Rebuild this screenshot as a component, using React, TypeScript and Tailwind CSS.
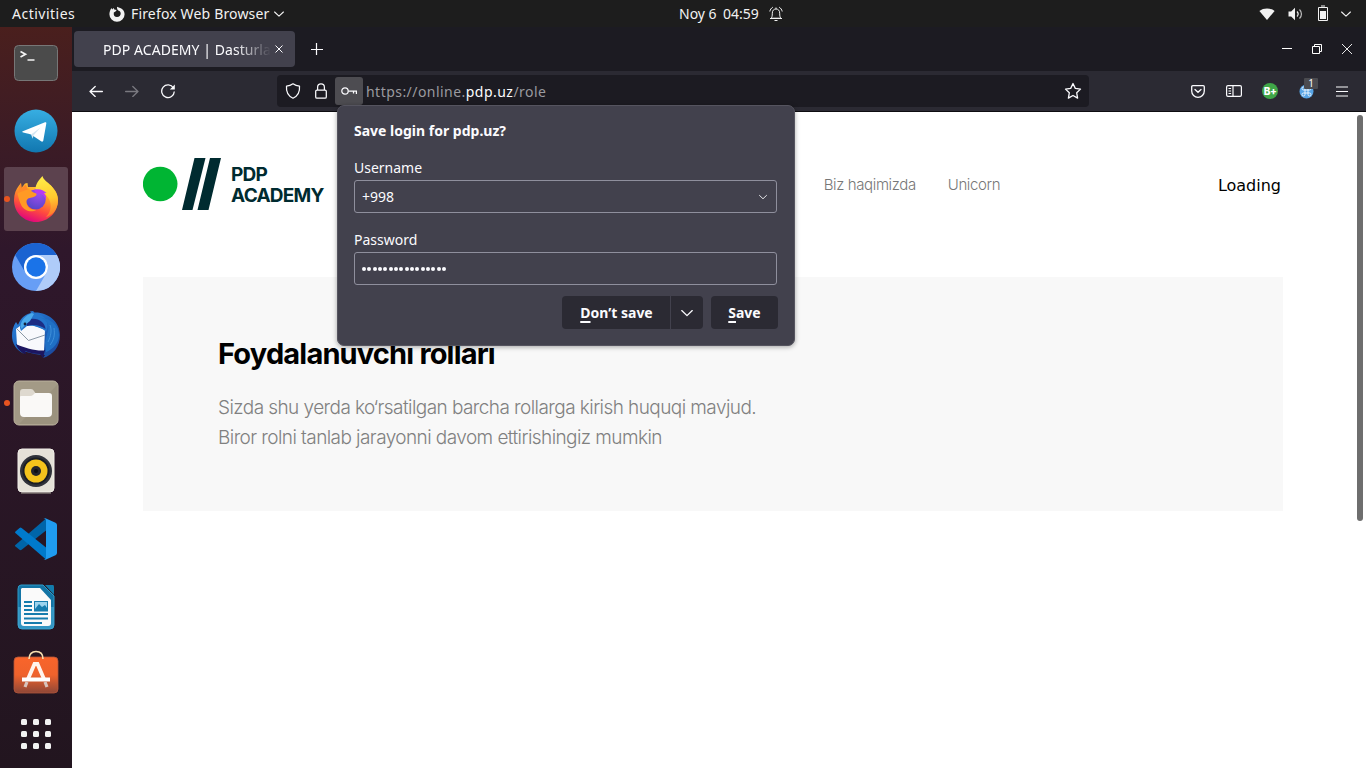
import type { ReactNode } from 'react';

const Chevron = ({ size = 10, className = '' }: { size?: number; className?: string }) => (
  <svg width={size} height={size} viewBox="0 0 10 10" fill="none" stroke="currentColor" className={className}>
    <path d="M0.6 3 5 7.2 9.4 3" strokeWidth="1.1" strokeLinecap="round" strokeLinejoin="round" />
  </svg>
);

function TopBar() {
  return (
    <header className="flex h-[27px] shrink-0 items-center bg-[#1d1d1d] text-sm text-[#f2f2f2]">
      <div className="flex w-[679px] items-center pl-3">
        <span className="w-[97px] tracking-[0.5px]">Activities</span>
        <svg width="16" height="16" viewBox="0 0 16 16" className="mr-[6px]">
          <path
            fill="#f2f2f2"
            d="M8 0.8 9.8 1.4C13.6 2.2 15.6 5 15.6 8.3A7.6 7.4 0 0 1 .4 8.3C.4 6 1.2 3.5 2.6 1.9l.5 1.7L4.7 2l.6 1.6 2.4.5-1.2 1.5-1.7.8C4.3 9.3 5.8 11 8 11c2.4 0 3.7-1.6 3.7-3.5 0-1.4-.8-2.5-2.1-2.8L8.2 3.2Z"
          />
        </svg>
        <span className="tracking-[0.16px]">Firefox Web Browser</span>
        <Chevron className="ml-[5px]" />
      </div>
      <div className="flex items-center">
        <span className="w-[37px] whitespace-nowrap">Noy 6</span>
        <span className="ml-[7px]">04:59</span>
        <svg width="14" height="16" viewBox="0 0 14 16" fill="none" stroke="#f2f2f2" className="ml-[10px]">
          <path d="M2 12.2c1-1 1.3-2 1.3-5C3.300 4.500 4.800 3 7 3s3.700 1.500 3.700 4.200c0 3 .3 4 1.300 5ZM1 12.500h12M5.500 14.500h3M7 3V1.500M3.800 1.200C2.200 2.200 1.200 3.500.8 5.500M10.200 1.200c1.600 1 2.600 2.300 3 4.300" />
        </svg>
      </div>
      <div className="ml-auto flex items-center pr-[15px]">
        <svg width="16" height="12" viewBox="0 0 16 12" fill="#f2f2f2" className="mr-[13px]">
          <path d="M.4 3C4.500-.3 11.500-.3 15.600 3L8 12Z" />
        </svg>
        <svg width="16" height="14" viewBox="0 0 16 14" className="mr-[14px]">
          <path fill="#f2f2f2" d="M.5 4.500h2.700L7 .8v12.400L3.200 9.500H.5Z" />
          <path fill="none" stroke="#f2f2f2" strokeWidth="1.200" d="M9 4.500c1.300 1.400 1.300 3.600 0 5" />
          <path fill="none" stroke="#bbb" strokeWidth="1.200" d="M11.500 2.500c2.600 2.600 2.600 6.400 0 9" />
        </svg>
        <svg width="10" height="16" viewBox="0 0 10 16" className="mr-[13px] -translate-y-px">
          <path fill="none" stroke="#f2f2f2" d="M.5 2.500h9v13h-9ZM3 1h4" />
          <path fill="#f2f2f2" d="M2 6h6v8H2Z" />
        </svg>
        <Chevron />
      </div>
    </header>
  );
}

function TerminalIcon() {
  return (
    <svg width="44" height="36" viewBox="0 0 44 36">
      <rect x=".5" y=".5" width="43" height="35" rx="4" fill="#4b4b4b" stroke="#777" />
      <path d="M6.500 6.500 11.500 9.200 6.500 12M13.500 15h7" fill="none" stroke="#f4f4f4" strokeWidth="1.700" />
    </svg>
  );
}

function TelegramIcon() {
  return (
    <svg width="44" height="44" viewBox="0 0 44 44">
      <defs>
        <linearGradient id="tg" x2="0" y2="1">
          <stop stopColor="#37aee2" />
          <stop offset="1" stopColor="#1177b0" />
        </linearGradient>
      </defs>
      <circle cx="22" cy="22" r="21.500" fill="url(#tg)" />
      <path fill="#fff" d="M8.200 22.500 31 13.300c.9-.3 1.500.2 1.300 1.200l-3 17c-.2 1.200-1.200 1.500-2.200.8L17 25.500c-3.500-.9-6.500-1.500-8.500-2.200Z" />
      <path fill="#d5e7f2" d="m17 25.500 9.500-7-7 8-.8 3.200Z" />
    </svg>
  );
}

function FirefoxIcon() {
  return (
    <svg width="46" height="48" viewBox="0 0 46 48">
      <defs>
        <linearGradient id="fx1" x1=".75" y1=".2" x2=".4" y2="1">
          <stop offset="0" stopColor="#ffc02f" />
          <stop offset=".3" stopColor="#ff9029" />
          <stop offset=".62" stopColor="#ff4a3f" />
          <stop offset="1" stopColor="#e0067c" />
        </linearGradient>
        <radialGradient id="fx2" cx=".65" cy=".2" r=".8">
          <stop stopColor="#a04df0" />
          <stop offset="1" stopColor="#5a45c8" />
        </radialGradient>
        <linearGradient id="fx3" x2=".1" y2="1">
          <stop stopColor="#fff04a" />
          <stop offset=".6" stopColor="#ffc92e" />
          <stop offset="1" stopColor="#ff7d2c" />
        </linearGradient>
      </defs>
      <path fill="url(#fx1)" d="M1 25C1 19 3 14 6 10.500L8 8l.5 5L12 8.500 14.500 8l.5 4h14l8-2c5 4 8 9 8 15 0 12.500-10 22-22 22S1 37.500 1 25Z" />
      <path fill="url(#fx3)" d="M29.500 1c1 4 5 6 8.500 9.500 5 6 8 11 6.500 19C43 36 39 40 33 42c5-5 6-12 3-18-3-5-7-8-13.500-9.500 0-6 3.500-9.500 7-13.500Z" />
      <circle cx="22.700" cy="24.500" r="10" fill="url(#fx2)" />
      <path fill="#ff9a25" d="M4.500 19c1.500-4 4-6 8-6.500 3 0 5 3.500 8 5l3 1c.5 2-1 3-3.500 3.700-3 .8-5.500.5-6.500 3.800-.5 5 4 9.500 10 8.700-5 3.500-12 1-15-4-2-4-3-8-4-11.700Z" />
      <path fill="#ff8a2a" d="M5 18c0-3.500 1.300-7 3-10l.5 5L13 9.500l1.500 5Z" />
      <path fill="#b63bf3" d="M21 14.800c5-1.500 9-.3 12.500 3.200l-2.500.2c2 2 2.500 4 1.800 6.300-2-4.500-4.500-6-9.500-6Z" />
    </svg>
  );
}

function ChromiumIcon() {
  return (
    <svg width="48" height="48" viewBox="0 0 48 48">
      <circle cx="24" cy="24" r="24" fill="#679ef5" />
      <path fill="#1b63d1" d="M3.200 12A24 24 0 0 1 44.800 12H24A12 12 0 0 0 13.600 30Z" />
      <path fill="#afccf9" d="M44.800 12A24 24 0 0 1 24 48l10.400-18A12 12 0 0 0 24 12Z" />
      <circle cx="24" cy="24" r="12" fill="#fff" />
      <circle cx="24" cy="24" r="9.700" fill="#1a73e8" />
    </svg>
  );
}

function ThunderbirdIcon() {
  return (
    <svg width="48" height="48" viewBox="0 0 48 48">
      <defs>
        <linearGradient id="tb" x2="1" y2="1">
          <stop stopColor="#2f86dc" />
          <stop offset=".5" stopColor="#1d63bc" />
          <stop offset="1" stopColor="#1b4396" />
        </linearGradient>
      </defs>
      <path fill="url(#tb)" d="M4 11 6 14 C9 6 14 3 19 2L18 .5 21 0l1.500 1.500C36 1 48 11 48 24c0 12-7 20-17 23l2-3c-9 0-18-3-25-5l4 4C4 39 0 32 0 25 0 20 1 15 4 11Z" />
      <path fill="#1c1660" d="M4 33c8 2 18 5 29 6l-2 8-3-4c-6 0-10-1-15-3l1 3C8 41 5 37 4 33Z" />
      <path fill="#f8f9fc" d="M4 18 8 15l12-1 13 5-1 20.500C23 40 13 37 5 33.500Z" />
      <path d="m5 18 11.500 11.500L33 24" stroke="#8b98a5" fill="none" />
      <path fill="#2475cc" d="M8 17c0-7 5-13 12-15 5 0 11 2 14 7 2 4 2 7 0 12-4-5-12-7-19-6l-6 5Z" />
      <path fill="#1c2d84" d="M19 8c-3 1-4.500 4-4 7 6-2 13-1 18.500 3C33 12 27 7 19 8Z" />
      <path fill="#1f70c5" d="M27 6c10 4 11 9 8 17l-2 9 1 9c8-3 13-10 13-17C47 14 39 8 27 6Z" />
      <path fill="#4aa9ea" d="M8.500 15C9 9 14 4 20 2l2 1-4 7-5 4-3.500 4Z" />
      <circle cx="13" cy="13" r="1.400" fill="#151f3a" />
      <path d="M38 14c2 5 1 11-2 17m6-14c1 7 0 12-4 17" stroke="#4293dc" strokeWidth=".9" fill="none" />
    </svg>
  );
}

function FilesIcon() {
  return (
    <svg width="46" height="46" viewBox="0 0 46 46">
      <rect x="1" y="1" width="44" height="44" rx="5" fill="#a39a86" stroke="#bbb29d" />
      <path fill="#8f8674" d="M45 4 6 44h34q5 0 5-5Z" opacity=".4" />
      <path fill="#ded9cf" d="M7 12q0-3 3-3h8q2 0 3 2l2 3h14v10H7Z" />
      <path fill="#faf9f7" d="M7 17q0-1 1-1h9q2 0 3-1l2-2h14q3 0 3 3v17q0 4-4 4H11q-4 0-4-4Z" />
    </svg>
  );
}

function RhythmboxIcon() {
  return (
    <svg width="38" height="46" viewBox="0 0 38 46">
      <rect x="1" y="1" width="36" height="43" rx="4" fill="#e5e1d8" stroke="#f1eee8" />
      <path d="M4 45h30" stroke="#a6a196" />
      <circle cx="19" cy="23" r="16" fill="#30323a" />
      <circle cx="19" cy="23" r="13.500" fill="#1a1d24" />
      <circle cx="19" cy="23" r="11.500" fill="#f3c21c" />
      <circle cx="19" cy="23" r="5" fill="#22242b" />
      <circle cx="19" cy="23" r="2" fill="#0d0e12" />
    </svg>
  );
}

function CodeIcon() {
  return (
    <svg width="42" height="42" viewBox="0 0 42 42">
      <path fill="#0065a9" d="m.5 28.500 4 3.300q1 .8 2.100 0L31 12.500V.5L.4 27q-.8.700.1 1.500Z" />
      <path fill="#007acc" d="m.5 13.500 4-3.500q1-.8 2.100 0L31 29.500v12L.4 15q-.8-.700.1-1.500Z" />
      <path fill="#1f9cf0" d="M31 41.500q-1.500.5-2.500-.5 2.500 1 2.500-1.500v-37Q31 0 28.500 1q1-1 2.500-.5l9.500 4.200Q42 5.500 42 7v28q0 1.500-1.500 2.300Z" />
    </svg>
  );
}

function WriterIcon() {
  return (
    <svg width="38" height="46" viewBox="0 0 38 46">
      <path fill="#1374a5" stroke="#2e9ac7" d="M4 1h22l11 11v29q0 4-4 4H5q-4 0-4-4V5q0-4 3-4Z" />
      <path fill="#4badd7" opacity=".6" d="M1 23h36v18q0 4-4 4H5q-4 0-4-4Z" />
      <path fill="#fafafa" d="M5 4h18l11 12v23q0 3-3 3H7q-3 0-3-3V5Z" />
      <path fill="#137cac" d="M28 1h8q1 0 1 2v8Z" />
      <path d="M7 18h8M7 22h8M7 26h8M7 30h24M7 34.500h24M7 39h18" stroke="#167cad" strokeWidth="1.900" />
      <rect x="17.500" y="17.500" width="13" height="9.500" fill="#9cd3ed" stroke="#167cad" />
      <path fill="#167cad" d="m18 25 4-5 3 3 3-2 2 3v3H18Z" />
    </svg>
  );
}

function SoftwareIcon() {
  return (
    <svg width="46" height="46" viewBox="0 0 46 46" className="-translate-y-[3px]">
      <defs>
        <linearGradient id="sw" x2="0" y2="1">
          <stop stopColor="#f9652b" />
          <stop offset=".5" stopColor="#ef622c" />
          <stop offset="1" stopColor="#8e4737" />
        </linearGradient>
      </defs>
      <rect x="1" y="8" width="44" height="36" rx="4" fill="url(#sw)" stroke="#b4553a" strokeWidth=".8" />
      <path d="M16 10c0-5 3-7.500 7-7.500s7 2.500 7 7.500" fill="none" stroke="#f7dfb0" strokeWidth="1.600" />
      <path d="m15 30 6.500-15h3L31 30" stroke="#fff4ed" strokeWidth="3.800" fill="none" />
      <path d="M9 30.500h28" stroke="#fff" strokeWidth="4" />
      <path d="m14 33-2 5m20-5 2 5" stroke="#d8c4bd" strokeWidth="3.200" />
    </svg>
  );
}

function AppsIcon() {
  return (
    <svg width="30" height="30" viewBox="0 0 30 30" fill="#f2f2f2">
      {[0, 12, 24].map((y) => [0, 12, 24].map((x) => <rect key={`${x}-${y}`} x={x} y={y} width="6" height="6" rx="1.500" />))}
    </svg>
  );
}

function DockItem({ children, active, running }: { children: ReactNode; active?: boolean; running?: boolean }) {
  return (
    <div className={`relative flex size-16 shrink-0 items-center justify-center ${active ? 'rounded-[3px] bg-[#5c424e]' : ''}`}>
      {running && <span className="absolute left-0 top-[29px] size-[6px] rounded-full bg-[#e95420]" />}
      {children}
    </div>
  );
}

function Dock() {
  return (
    <nav className="flex w-[72px] shrink-0 flex-col items-center gap-1 overflow-hidden bg-linear-to-b from-[#4a1f1d] from-0% via-[#2f172b] via-30% to-[#22151f] to-100% pt-1">
      <DockItem><TerminalIcon /></DockItem>
      <DockItem><TelegramIcon /></DockItem>
      <DockItem active running><FirefoxIcon /></DockItem>
      <DockItem><ChromiumIcon /></DockItem>
      <DockItem><ThunderbirdIcon /></DockItem>
      <DockItem running><FilesIcon /></DockItem>
      <DockItem><RhythmboxIcon /></DockItem>
      <DockItem><CodeIcon /></DockItem>
      <DockItem><WriterIcon /></DockItem>
      <DockItem><SoftwareIcon /></DockItem>
      <div className="pt-[8px]"><AppsIcon /></div>
    </nav>
  );
}

function TabStrip() {
  return (
    <div className="flex h-11 shrink-0 items-center bg-[#1c1b22] pl-[2px] text-[#fbfbfe]">
      <div className="flex h-9 w-[221px] items-center rounded-[4px] bg-[#42414d] pl-[29px]">
        <span className="w-[168px] overflow-hidden whitespace-nowrap pt-[2px] text-sm tracking-[0.06px] [mask-image:linear-gradient(to_right,#000_132px,transparent_168px)]">
          PDP ACADEMY | Dasturla
        </span>
        <svg width="8" height="8" viewBox="0 0 8 8" stroke="currentColor" className="ml-1">
          <path d="m.5.5 7 7m0-7-7 7" />
        </svg>
      </div>
      <svg width="12" height="12" viewBox="0 0 12 12" stroke="currentColor" strokeWidth="1.200" className="ml-4">
        <path d="M5.500 0v12M0 6.500h12" />
      </svg>
      <div className="ml-auto flex items-center pr-[14px]">
        <svg width="10" height="10" viewBox="0 0 10 10" stroke="#fff"><path d="M0 4.500h10" /></svg>
        <svg width="10" height="10" viewBox="0 0 10 10" fill="none" stroke="#fff" className="ml-5">
          <path d="M.5 2.500h7v7h-7ZM2.500 2.500v-2h7v7h-2" />
        </svg>
        <svg width="10" height="10" viewBox="0 0 10 10" stroke="#fff" strokeWidth=".9" className="ml-5"><path d="m0 0 10 10M10 0 0 10" /></svg>
      </div>
    </div>
  );
}

function AddressBar() {
  return (
    <div className="flex h-8 w-[812px] items-center rounded-[4px] bg-[#1c1b22]">
      <svg width="16" height="16" viewBox="0 0 16 16" fill="none" stroke="currentColor" strokeWidth="1.250" className="ml-2">
        <path strokeLinejoin="round" d="M8 .8c2 1.500 4.200 2.200 6.500 2.300.5 5.400-2 10-6.500 12.100C3.500 13.100 1 8.500 1.500 3.100 3.800 3 6 2.300 8 .8Z" />
      </svg>
      <svg width="12" height="16" viewBox="0 0 12 16" fill="none" stroke="currentColor" strokeWidth="1.250" className="ml-[14px]">
        <rect x=".7" y="7" width="10.600" height="8.200" rx="1.300" />
        <path d="M2.600 7V4.200a3.400 3.400 0 0 1 6.800 0V7" />
      </svg>
      <div className="ml-2 flex h-7 w-7 items-center justify-center rounded-[3px] bg-[#4d4c51]">
        <svg width="16" height="8" viewBox="0 0 16 8" fill="none" stroke="currentColor" strokeWidth="1.250">
          <circle cx="4" cy="4" r="3.200" />
          <path d="M7.200 4h8.200v3M12.500 4v2.500" />
        </svg>
      </div>
      <span className="ml-[3px] pt-px text-sm tracking-[0.46px] text-[#9a9a9f]">
        https://online.<span className="text-[#fbfbfe]">pdp.uz</span>/role
      </span>
      <svg width="18" height="18" viewBox="0 0 18 18" fill="none" stroke="currentColor" strokeWidth="1.300" strokeLinejoin="round" className="ml-auto mr-[7px]">
        <path d="m9 1.500 2.300 4.900 5.200.7-3.800 3.700.9 5.300L9 13.500l-4.600 2.600.9-5.300L1.500 7.100l5.200-.7Z" />
      </svg>
    </div>
  );
}

function Toolbar() {
  return (
    <div className="flex h-[41px] shrink-0 items-center border-b border-[#0d0c10] bg-[#2b2a33] pl-[17px] text-[#fbfbfe]">
      <svg width="14" height="12" viewBox="0 0 14 12" fill="none" stroke="currentColor" strokeWidth="1.300" strokeLinecap="round" strokeLinejoin="round">
        <path d="M13.400 6.500H1m5.200-5L1 6.500l5.200 5" />
      </svg>
      <svg width="14" height="12" viewBox="0 0 14 12" fill="none" stroke="#7a7980" strokeWidth="1.300" strokeLinecap="round" strokeLinejoin="round" className="ml-[22px]">
        <path d="M.6 6.500H13m-5.200-5L13 6.500l-5.200 5" />
      </svg>
      <svg width="16" height="16" viewBox="0 0 16 16" fill="none" stroke="currentColor" strokeWidth="1.300" className="ml-[21px]">
        <path d="M13.400 5A6.300 6.300 0 1 0 14.300 8.500" />
        <path d="M14.800 1.500V6.500H9.800Z" fill="currentColor" stroke="none" />
      </svg>
      <div className="ml-[101px]"><AddressBar /></div>
      <div className="ml-auto flex items-center pr-[18px]">
        <svg width="14" height="13" viewBox="0 0 14 13" fill="none" stroke="currentColor" strokeWidth="1.300">
          <path d="M1.800.7h10.400q1.100 0 1.100 1.100V6A6.300 6.300 0 0 1 .7 6V1.800Q.7.7 1.800.7Z" />
          <path d="m4 4.500 3 2.800 3-2.800" strokeLinecap="round" />
        </svg>
        <svg width="16" height="12" viewBox="0 0 16 12" fill="none" stroke="currentColor" strokeWidth="1.200" className="ml-[21px]">
          <rect x=".6" y=".6" width="14.800" height="10.800" rx="1.400" />
          <path d="M7 .6v10.800M2.500 3.500h2.600M2.500 6h2.600M2.500 8.500h2.600" />
        </svg>
        <span className="ml-[20px] flex size-4 items-center justify-center rounded-full bg-[#3fa648] font-['Inter',sans-serif] text-[10px] font-extrabold tracking-[-0.5px] text-white">
          B+
        </span>
        <span className="relative ml-[21px] flex size-[15px]">
          <svg width="15" height="15" viewBox="0 0 15 15">
            <circle cx="7.500" cy="7.500" r="7" fill="#57a4e6" />
            <path d="M6 6h3v3H6ZM6 6H4.500A1.500 1.500 0 1 1 6 4.500ZM9 6h1.500A1.500 1.500 0 1 0 9 4.500ZM6 9H4.500A1.500 1.500 0 1 0 6 10.500ZM9 9h1.500A1.500 1.500 0 1 1 9 10.500Z" fill="none" stroke="#e5f2fd" />
          </svg>
          <span className="absolute left-[5px] top-[-6px] flex h-[11px] w-[14px] items-center justify-center rounded-[1px] bg-[#4b4b50] text-[10px] leading-none text-white">
            1
          </span>
        </span>
        <svg width="12" height="11" viewBox="0 0 12 11" stroke="currentColor" strokeWidth="1.200" className="ml-[22px]">
          <path d="M0 1h12M0 5.500h12M0 10h12" />
        </svg>
      </div>
    </div>
  );
}

function Page() {
  return (
    <main className="relative flex min-h-0 flex-1 flex-col overflow-hidden bg-white font-['Inter',sans-serif]">
      <div className="ml-[71px] flex h-[144px] w-[1140px] items-center">
        <svg width="79" height="52" viewBox="0 0 79 52">
          <circle cx="17.200" cy="26" r="17.300" fill="#00b533" />
          <path fill="#002b30" d="M51.500 0h11L49.500 52H39ZM67 0h11L65.500 52H54.500Z" />
        </svg>
        <div className="ml-[9px] pt-px text-[19px] font-bold leading-[21px] tracking-[-0.75px] text-[#002b30]">
          <div>PDP</div>
          <div>ACADEMY</div>
        </div>
        <div className="ml-[500px] flex gap-8 pt-[2px] text-[15px] font-light tracking-[-0.38px] text-[#777]">
          <span className="w-[92px] whitespace-nowrap">Biz haqimizda</span>
          <span>Unicorn</span>
        </div>
        <span className="ml-auto mr-[2px] pt-[3px] font-['DejaVu_Sans',sans-serif] text-base text-black">Loading</span>
      </div>
      <section className="ml-[71px] mt-[21px] h-[234px] w-[1140px] bg-[#f8f8f8] pl-[75px] pt-[59px]">
        <h1 className="text-[29px] font-bold leading-9 tracking-[-0.83px] text-black">Foydalanuvchi rollari</h1>
        <p className="mt-[21px] text-[19px] font-light leading-[30px] tracking-[-0.57px] text-[#808080]">
          Sizda shu yerda ko‘rsatilgan barcha rollarga kirish huquqi mavjud.
          <br />
          Biror rolni tanlab jarayonni davom ettirishingiz mumkin
        </p>
      </section>
      <div className="absolute right-[3px] top-[3px] h-[406px] w-[6px] rounded-full bg-[#6e6e6e]" />
    </main>
  );
}

function LoginPopup() {
  return (
    <div className="absolute left-[337px] top-[105px] flex h-[241px] w-[458px] flex-col rounded-[7px] border border-[#55545f] bg-[#42414d] px-4 text-sm text-[#fbfbfe] shadow-[0_1px_5px_rgba(0,0,0,0.35)]">
      <div className="mt-[15px] h-5 font-bold leading-5">Save login for pdp.uz?</div>
      <div className="mt-[17px] h-5 leading-5">Username</div>
      <div className="mt-[2px] flex h-[33px] w-[423px] items-center justify-between rounded-[3px] border border-[#8f8f9d] px-[7px]">
        <span>+998</span>
        <Chevron size={8} className="mr-[2px] mt-px" />
      </div>
      <div className="mt-[17px] h-5 leading-5">Password</div>
      <div className="mt-[2px] flex h-[33px] w-[423px] items-center gap-[1.330px] rounded-[3px] border border-[#8f8f9d] px-[7px]">
        {Array.from({ length: 16 }, (_, i) => (
          <span key={i} className="size-[4px] rounded-full bg-[#fbfbfe]" />
        ))}
      </div>
      <div className="mt-[11px] flex h-[33px] justify-end font-bold">
        <div className="flex w-[108px] items-center justify-center rounded-l-[4px] bg-[#2b2a33] pl-px">
          <span><span className="underline decoration-[1.500px] underline-offset-[3px]">D</span>on’t save</span>
        </div>
        <div className="ml-px flex w-8 items-center justify-center rounded-r-[4px] bg-[#2b2a33]"><Chevron size={12} /></div>
        <div className="ml-2 flex w-[67px] items-center justify-center rounded-[4px] bg-[#2b2a33]">
          <span><span className="underline decoration-[1.500px] underline-offset-[3px]">S</span>ave</span>
        </div>
      </div>
    </div>
  );
}

export default function App() {
  return (
    <div className="relative flex h-[768px] w-[1366px] flex-col overflow-hidden font-['Noto_Sans','Open_Sans',sans-serif]">
      <TopBar />
      <div className="flex min-h-0 flex-1">
        <Dock />
        <div className="flex min-w-0 flex-1 flex-col">
          <TabStrip />
          <Toolbar />
          <Page />
        </div>
      </div>
      <LoginPopup />
    </div>
  );
}
